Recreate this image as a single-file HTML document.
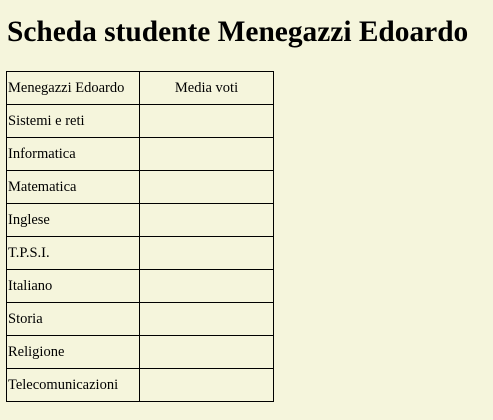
<!DOCTYPE html>
<html><head><style>
html,body{margin:0;padding:0;background:#f5f5dc;width:493px;height:420px;overflow:hidden}
body{font-family:"Liberation Serif",serif;color:#000}
h1{position:absolute;left:7px;top:14px;margin:0;font-size:29.4px;font-weight:bold;line-height:36px;white-space:nowrap}
table{position:absolute;left:6px;top:71px;border-collapse:collapse}
td{border:1px solid #000;height:33px;padding:0 1px;font-size:14.5px;box-sizing:border-box;white-space:nowrap}
td:first-child{width:133px}
td:last-child{width:134px;text-align:center}
</style></head><body>
<h1>Scheda studente Menegazzi Edoardo</h1>
<table>
<tr><td>Menegazzi Edoardo</td><td>Media voti</td></tr>
<tr><td>Sistemi e reti</td><td></td></tr>
<tr><td>Informatica</td><td></td></tr>
<tr><td>Matematica</td><td></td></tr>
<tr><td>Inglese</td><td></td></tr>
<tr><td>T.P.S.I.</td><td></td></tr>
<tr><td>Italiano</td><td></td></tr>
<tr><td>Storia</td><td></td></tr>
<tr><td>Religione</td><td></td></tr>
<tr><td>Telecomunicazioni</td><td></td></tr>
</table>
</body></html>
